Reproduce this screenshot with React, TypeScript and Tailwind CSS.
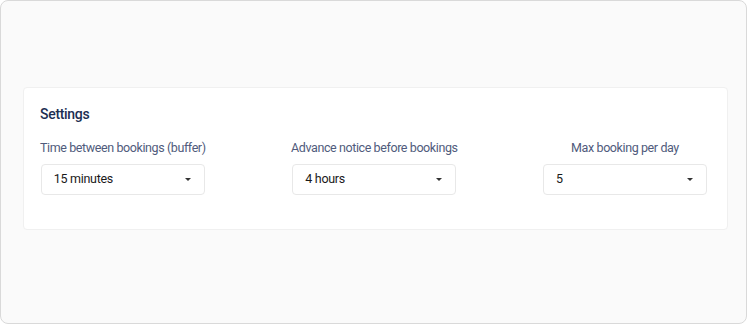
const settings = [
  { label: "Time between bookings (buffer)", value: "15 minutes" },
  { label: "Advance notice before bookings", value: "4 hours" },
  { label: "Max booking per day", value: "5" },
];

const Caret = () => (
  <svg width="6" height="3" viewBox="0 0 6 3" className="shrink-0">
    <path d="M0 0h6L3 3z" fill="#333" />
  </svg>
);

const App = () => {
  return (
    <div
      className="w-[747px] h-[324px] bg-[#fafafa] border border-[#d9d9d9] rounded-lg pt-[86px]"
      style={{ fontFamily: "Roboto, 'Liberation Sans', sans-serif" }}
    >
      <div className="ml-[22px] w-[705px] bg-white border border-[#f0f0f0] rounded pt-4 pb-[34px] pl-4 pr-[20px]">
        <h2 className="text-[14px] leading-5 font-medium tracking-[-0.3px] text-[#1c2e52]">Settings</h2>
        <div className="flex justify-between mt-4">
          {settings.map((s) => (
            <div key={s.label} className="flex flex-col items-center">
              <span className="text-[12.5px] leading-4 tracking-[-0.4px] text-[#505b7c] whitespace-nowrap">
                {s.label}
              </span>
              <button className="mt-[8px] w-[164px] h-[31px] flex items-center justify-between border border-[#e8e8e8] rounded bg-white pl-3 pr-[13px] text-[12.5px] tracking-[-0.3px] text-[#1a1a1a]">
                <span>{s.value}</span>
                <Caret />
              </button>
            </div>
          ))}
        </div>
      </div>
    </div>
  );
};

export default App;
